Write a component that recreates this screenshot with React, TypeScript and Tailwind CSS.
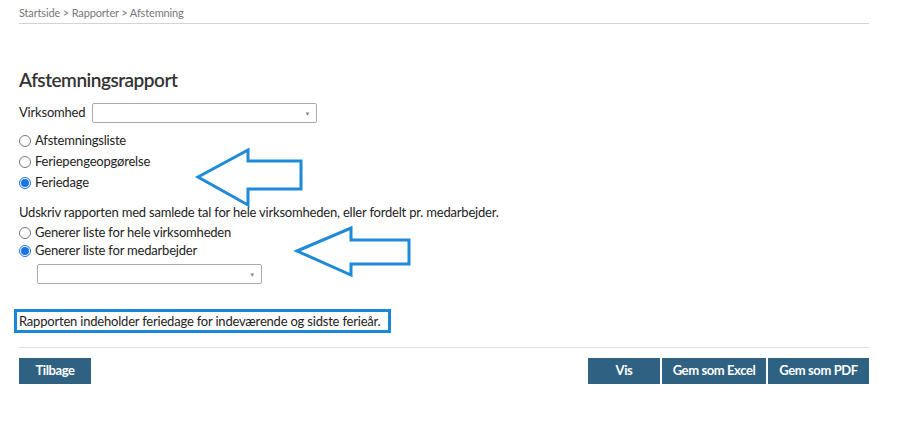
export default function App() {
  return (
    <div className="relative w-[923px] h-[437px] bg-white font-['Lato',sans-serif] text-[13px] tracking-[-0.2px] text-[#222]">
      <div className="ml-[19px] w-[850px]">
        <div className="h-[24px] border-b border-[#d4d4d4] pt-[6px] text-[11px] leading-[14px] tracking-[-0.15px] text-[#777]">
          Startside &gt; Rapporter &gt; Afstemning
        </div>

        <h1 className="mt-[45px] text-[19px] leading-[22px] font-semibold tracking-[-0.5px] text-[#333]">Afstemningsrapport</h1>

        <div className="mt-[12px] flex items-center h-[20px]">
          <span className="mr-[7px]">Virksomhed</span>
          <div className="w-[225px] h-[20px] border border-[#aaa] rounded-[2px] flex items-center justify-end pr-[6px]">
            <span className="text-[6px] text-[#888]">▼</span>
          </div>
        </div>

        <div className="mt-[9px] flex flex-col gap-[3px]">
          <Radio label="Afstemningsliste" />
          <Radio label="Feriepengeopgørelse" />
          <Radio label="Feriedage" checked />
        </div>

        <p className="mt-[12px] leading-[17px]">
          Udskriv rapporten med samlede tal for hele virksomheden, eller fordelt pr. medarbejder.
        </p>
        <div className="mt-[3px] flex flex-col">
          <Radio label="Generer liste for hele virksomheden" />
          <Radio label="Generer liste for medarbejder" checked />
        </div>
        <div className="ml-[18px] mt-[4px] w-[225px] h-[20px] border border-[#aaa] rounded-[2px] flex items-center justify-end pr-[6px]">
          <span className="text-[6px] text-[#888]">▼</span>
        </div>

        <div className="-ml-[5px] mt-[25px] w-[377px] h-[24px] border-[3px] border-[#1b87d8] flex items-center pl-[2px] whitespace-nowrap leading-none">
          Rapporten indeholder feriedage for indeværende og sidste ferieår.
        </div>

        <div className="mt-[14px] border-t border-[#ddd]" />

        <div className="mt-[10px] flex justify-between">
          <button className="h-[26px] w-[72px] bg-[#2e6182] text-white font-bold tracking-[-0.4px]">Tilbage</button>
          <div className="flex gap-[2px]">
            <button className="h-[26px] w-[72px] bg-[#2e6182] text-white font-bold tracking-[-0.4px]">Vis</button>
            <button className="h-[26px] w-[104px] bg-[#2e6182] text-white font-bold tracking-[-0.4px]">Gem som Excel</button>
            <button className="h-[26px] w-[101px] bg-[#2e6182] text-white font-bold tracking-[-0.4px]">Gem som PDF</button>
          </div>
        </div>
      </div>

      <svg className="absolute left-0 top-0 pointer-events-none" width="923" height="437">
        <polygon
          points="198,177 248,150 248,161 301,161 301,189 248,189 248,205"
          fill="none"
          stroke="#1f8ad8"
          strokeWidth="3"
        />
        <polygon
          points="297,251 351,228 351,240 409,240 409,264 351,264 351,275"
          fill="none"
          stroke="#1f8ad8"
          strokeWidth="3"
        />
      </svg>
    </div>
  );
}

function Radio({ label, checked }: { label: string; checked?: boolean }) {
  return (
    <div className="flex items-center h-[18px]">
      <span
        className={
          checked
            ? "w-[12px] h-[12px] rounded-full border border-[#1a73e8] bg-white flex items-center justify-center mr-[4px]"
            : "w-[12px] h-[12px] rounded-full border border-[#767676] bg-white mr-[4px]"
        }
      >
        {checked && <span className="w-[8px] h-[8px] rounded-full bg-[#1a73e8]" />}
      </span>
      <span>{label}</span>
    </div>
  );
}
